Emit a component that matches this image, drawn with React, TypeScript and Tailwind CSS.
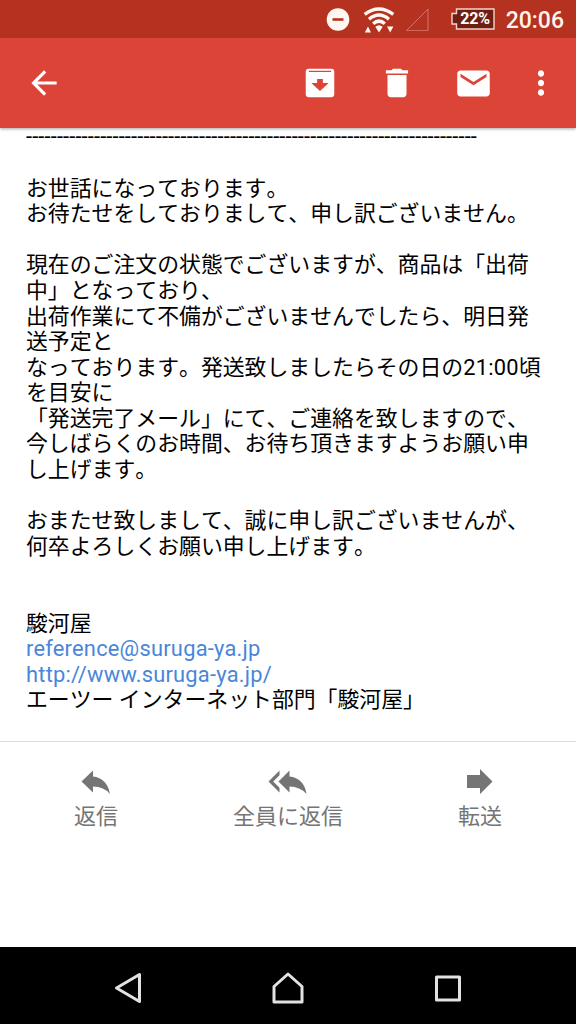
import type { ReactNode } from "react";

const body = [
  "",
  "お世話になっております。",
  "お待たせをしておりまして、申し訳ございません。",
  "",
  "現在のご注文の状態でございますが、商品は「出荷",
  "中」となっており、",
  "出荷作業にて不備がございませんでしたら、明日発",
  "送予定と",
];

const bodyRest = [
  "を目安に",
  "「発送完了メール」にて、ご連絡を致しますので、",
  "今しばらくのお時間、お待ち頂きますようお願い申",
  "し上げます。",
  "",
  "おまたせ致しまして、誠に申し訳ございませんが、",
  "何卒よろしくお願い申し上げます。",
  "",
  "",
  "駿河屋",
];

function Line({ children }: { children: ReactNode }) {
  return <p className="h-[25.6px] shrink-0">{children}</p>;
}

function StatusBar() {
  return (
    <div className="flex h-[38px] items-center justify-end bg-[#b53120] pr-[12px] text-[#fff3ec]">
      <svg width="24" height="24" viewBox="0 0 24 24" className="mr-[13px]">
        <circle cx="12" cy="12.5" r="11.3" fill="#fff8f2" />
        <path d="M6.5 12.5h11" stroke="#b53120" strokeWidth="2.6" />
      </svg>
      <svg width="32" height="28" viewBox="0 0 32 28" className="mr-[10px]">
        <g fill="none" stroke="#fff8f2" strokeWidth="3.4">
          <path d="M1.7 9.4Q16 -1.2 30.3 9.4" />
          <path d="M6 14.2Q16 5.8 26 14.2" />
          <path d="M10.2 18.8Q16 13.4 21.8 18.8" />
        </g>
        <path d="M12.3 21.8Q16 18.8 19.7 21.8L16 27.500ZM1.800 27.500L5 21.500L8 27.500ZM24 21.500H30.400L27.200 27.500Z" fill="#fff8f2" />
      </svg>
      <svg width="24" height="24" viewBox="0 0 24 24" className="mr-[22px]">
        <path d="M1.5 23.7L23 2V23.7Z" fill="none" stroke="#dc7468" strokeWidth="1" />
      </svg>
      <div className="relative mr-[11px] flex h-[22px] w-[44px] items-center">
        <svg width="44" height="22" viewBox="0 0 44 22" className="absolute inset-0">
          <path d="M5.5 1H43V21H5.5V16H1V5.5H5.5Z" fill="#6f1e14" stroke="#f5d3c8" strokeWidth="1.4" />
        </svg>
        <span className="relative w-full pl-[5px] text-center text-[16px] leading-none font-bold tracking-[-0.2px] text-white">22%</span>
      </div>
      <span className="pt-[2px] text-[23px] leading-none font-medium">20:06</span>
    </div>
  );
}

function Toolbar() {
  return (
    <div className="flex h-[90px] items-center bg-[#db4437] text-white">
      <svg width="38" height="38" viewBox="0 0 24 24" fill="currentColor" className="ml-[25px]">
        <path d="M20 11H7.83l5.59-5.59L12 4l-8 8 8 8 1.41-1.41L7.83 13H20v-2z" />
      </svg>
      <svg width="38" height="38" viewBox="0 0 24 24" fill="currentColor" className="ml-[238px]">
        <path d="M4.8 3H19.2Q21 3 21 4.8V19Q21 21 19 21H5Q3 21 3 19V4.8Q3 3 4.8 3ZM5 4.2V5H19V4.2ZM10.2 9.5V12H6.5L12 17L17.5 12H13.8V9.5Z" fillRule="evenodd" />
      </svg>
      <svg width="38" height="38" viewBox="0 0 24 24" fill="currentColor" className="ml-[39px]">
        <path d="M6 19c0 1.1.9 2 2 2h8c1.1 0 2-.9 2-2V7H6v12zM19 4h-3.5l-1-1h-5l-1 1H5v2h14V4z" />
      </svg>
      <svg width="39" height="39" viewBox="0 0 24 24" fill="currentColor" className="ml-[38px]">
        <path d="M20 4H4c-1.1 0-2 .9-2 2v12c0 1.1.9 2 2 2h16c1.100 0 2-.9 2-2V6c0-1.100-.9-2-2-2zm0 4l-8 5-8-5V6l8 5 8-5v2z" />
      </svg>
      <svg width="38" height="38" viewBox="0 0 24 24" fill="currentColor" className="ml-[29px]">
        <path d="M12 8c1.1 0 2-.9 2-2s-.9-2-2-2-2 .9-2 2 .9 2 2 2zm0 2c-1.100 0-2 .9-2 2s.9 2 2 2 2-.9 2-2-.9-2-2-2zm0 6c-1.100 0-2 .9-2 2s.9 2 2 2 2-.9 2-2-.9-2-2-2z" />
      </svg>
    </div>
  );
}

function Action({ label, children }: { label: string; children: ReactNode }) {
  return (
    <button className="flex flex-col items-center pt-[24px] text-[#757575]">
      <svg width="40" height="32" viewBox="0 0 40 32" fill="currentColor">
        {children}
      </svg>
      <span className="text-[22px] leading-[38px]">{label}</span>
    </button>
  );
}

export default function App() {
  return (
    <div className="flex h-[1024px] w-[576px] flex-col overflow-hidden bg-white font-['Roboto','Noto_Sans_CJK_JP',sans-serif] [font-kerning:none]">
      <header className="relative z-10 shrink-0 shadow-[0_1px_3px_rgba(0,0,0,0.35)]">
        <StatusBar />
        <Toolbar />
      </header>
      <main className="flex h-[614px] shrink-0 flex-col justify-end border-b border-[#dedede] pb-[28px] pl-[26px] text-[21.87px] leading-[25.6px] whitespace-pre text-black">
        <p className="h-[25.6px] shrink-0 tracking-[0.137px]">{"-".repeat(73)}</p>
        {body.map((line, i) => (
          <Line key={i}>{line}</Line>
        ))}
        <Line>
          なっております。発送致しましたらその日の<span className="tracking-[0.22px]">21:00</span>頃
        </Line>
        {bodyRest.map((line, i) => (
          <Line key={i}>{line}</Line>
        ))}
        <a className="h-[25.6px] tracking-[0.22px] text-[#4a86d8] [font-kerning:normal]">reference@suruga-ya.jp</a>
        <a className="h-[25.6px] tracking-[0.22px] text-[#4a86d8] [font-kerning:normal]">http://www.suruga-ya.jp/</a>
        <Line>エーツー インターネット部門「駿河屋」</Line>
      </main>
      <div className="grid grow grid-cols-3 items-start">
        <Action label="返信">
          <path d="M5.500 15.500L17 4.500V10.500Q31 12 34 28Q28 20.500 17 20.500V26.500Z" />
        </Action>
        <Action label="全員に返信">
          <path d="M11.500 4.500V9.200L5.200 15.500L11.500 21.800V26.500L.5 15.500ZM10.500 15.500L21.500 4.500V10.500Q36 12 38.500 28Q32 20.500 21.500 20.500V26.500Z" />
        </Action>
        <Action label="転送">
          <path d="M7 9H20V3L32.500 15.500L20 28V22H7Z" />
        </Action>
      </div>
      <nav className="flex h-[77px] shrink-0 items-center justify-center gap-[128px] bg-black pt-[6px]">
        <svg width="32" height="34" viewBox="0 0 32 34" fill="none" stroke="#e2e2e2" strokeWidth="3" strokeLinejoin="round">
          <path d="M4.500 16L27.500 2.500V29.500Z" />
        </svg>
        <svg width="32" height="34" viewBox="0 0 32 34" fill="none" stroke="#e2e2e2" strokeWidth="3" strokeLinejoin="round">
          <path d="M16 2L30 14.500V30H2V14.500Z" />
        </svg>
        <svg width="32" height="34" viewBox="0 0 32 34" fill="none" stroke="#e2e2e2" strokeWidth="3" strokeLinejoin="round">
          <path d="M4.500 5H27.500V28H4.500Z" />
        </svg>
      </nav>
    </div>
  );
}
